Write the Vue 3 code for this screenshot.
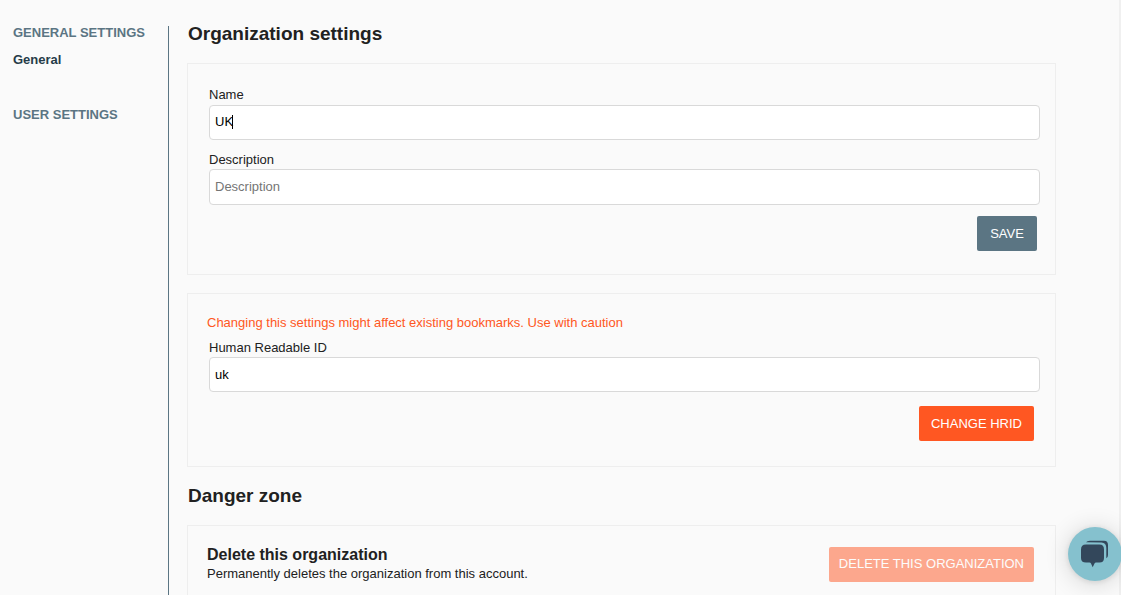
<script setup>
import { ref } from 'vue'

const name = ref('UK')
const description = ref('')
const hrid = ref('uk')
</script>

<template>
  <div class="page">
    <nav class="sidebar">
      <h2 class="nav-title">GENERAL SETTINGS</h2>
      <a class="nav-link" href="#general">General</a>
      <h2 class="nav-title">USER SETTINGS</h2>
    </nav>

    <main class="content">
      <h1 class="heading">Organization settings</h1>
      <form class="card" @submit.prevent>
        <div class="field">
          <label for="org-name">Name</label>
          <div class="control">
            <input id="org-name" v-model="name" type="text" />
            <span class="caret" aria-hidden="true"></span>
          </div>
        </div>
        <div class="field">
          <label for="org-description">Description</label>
          <input id="org-description" v-model="description" class="tall" type="text" placeholder="Description" />
        </div>
        <div class="actions save-row">
          <button class="btn slate" type="submit">SAVE</button>
        </div>
      </form>

      <form class="card second" @submit.prevent>
        <p class="warning">Changing this settings might affect existing bookmarks. Use with caution</p>
        <div class="field">
          <label for="org-hrid">Human Readable ID</label>
          <input id="org-hrid" v-model="hrid" type="text" />
        </div>
        <div class="actions">
          <button class="btn orange" type="submit">CHANGE HRID</button>
        </div>
      </form>

      <h1 class="heading danger">Danger zone</h1>
      <section class="card zone">
        <div>
          <h3 class="zone-title">Delete this organization</h3>
          <p class="zone-text">Permanently deletes the organization from this account.</p>
        </div>
        <button class="btn orange wide" type="button" disabled>DELETE THIS ORGANIZATION</button>
      </section>
    </main>

    <button class="chat" type="button" aria-label="Open chat">
      <svg viewBox="0 0 54 54" width="54" height="54" aria-hidden="true">
        <path fill="#33475b" d="M18 17.500Q13 17.500 13 22.500V31Q13 35.500 18 35.500H21.500Q22.500 35.500 23 36.500L24.700 40.300L26.500 36.500Q27 35.500 28 35.500H31.500Q36 35.500 36 31V22.500Q36 17.500 31.500 17.500Z" />
        <path fill="#33475b" d="M18 15.300Q19 13.700 22 13.700H36Q40 13.700 40 18V28Q40 30.500 38.300 31.300V21Q38.300 15.800 33.500 15.500Z" />
      </svg>
    </button>
  </div>
</template>

<style>
html,
body,
#app {
  height: 100%;
}

body {
  margin: 0;
  overflow: hidden;
  background: #fafafa;
}
</style>

<style scoped>
.page {
  box-sizing: border-box;
  display: flex;
  height: 100%;
  overflow: hidden;
  border-right: 2px solid #f0f0f0;
  padding-top: 21px;
  color: #212121;
  font: 13px/16px "Liberation Sans", Arial, sans-serif;
}

h1,
h2,
h3,
p {
  margin: 0;
}

.sidebar {
  box-sizing: border-box;
  flex: 0 0 169px;
  margin-top: 5px;
  padding-left: 13px;
  border-right: 1px solid #5b7583;
}

.nav-title {
  color: #5b7583;
  font-size: 13px;
  line-height: 14px;
}

.nav-link {
  display: block;
  margin: 12px 0 40px;
  color: #263c48;
  font-weight: bold;
  line-height: 16px;
  text-decoration: none;
}

.content {
  flex: 1;
  min-width: 0;
  padding: 0 63px 0 18px;
}

.heading {
  padding-left: 1px;
  font-size: 19px;
  line-height: 26px;
}

.danger {
  margin-top: 16px;
}

.card {
  margin-top: 16px;
  padding: 23px 15px 23px 21px;
  border: 1px solid #eeeeee;
}

.second {
  margin-top: 18px;
  padding: 21px 15px 25px 21px;
}

.field + .field {
  margin-top: 12px;
}

label {
  display: block;
  margin-bottom: 1px;
}

.control {
  position: relative;
  padding-top: 1px;
}

input {
  box-sizing: border-box;
  display: block;
  width: 100%;
  height: 35px;
  padding: 0 5px 1px;
  border: 1px solid #d9d9d9;
  border-radius: 4px;
  background: #fff;
  color: #000;
  font: inherit;
}

.control input,
.tall {
  padding-bottom: 2px;
}

.tall {
  height: 36px;
}

input::placeholder {
  color: #757575;
}

.caret {
  position: absolute;
  top: 11px;
  left: 23px;
  width: 1px;
  height: 14px;
  background: #000;
}

.actions {
  display: flex;
  justify-content: flex-end;
  margin-top: 14px;
  padding-right: 6px;
}

.save-row {
  margin-top: 11px;
  padding-right: 3px;
}

.btn {
  min-width: 60px;
  height: 35px;
  padding: 0 12px;
  border: 0;
  border-radius: 2px;
  color: #fff;
  font: inherit;
  white-space: nowrap;
}

.slate {
  background: #5b7583;
}

.orange {
  background: #ff5722;
}

.wide {
  padding: 0 10px 2px;
}

.btn:disabled {
  opacity: 0.5;
}

.warning {
  margin: 0 0 9px -2px;
  color: #ff5722;
}

.zone {
  display: flex;
  justify-content: space-between;
  align-items: flex-start;
  padding: 21px 21px 21px 19px;
}

.zone-title {
  margin-top: -1px;
  font-size: 16px;
  line-height: 18px;
}

.zone-text {
  line-height: 20px;
}

.chat {
  position: fixed;
  right: -1px;
  bottom: 14px;
  width: 54px;
  height: 54px;
  padding: 0;
  border: 0;
  border-radius: 50%;
  background: #85c1ce;
  box-shadow: 0 1px 6px rgba(0, 0, 0, 0.1), 0 2px 24px rgba(0, 0, 0, 0.16);
}

.chat svg {
  display: block;
}
</style>
